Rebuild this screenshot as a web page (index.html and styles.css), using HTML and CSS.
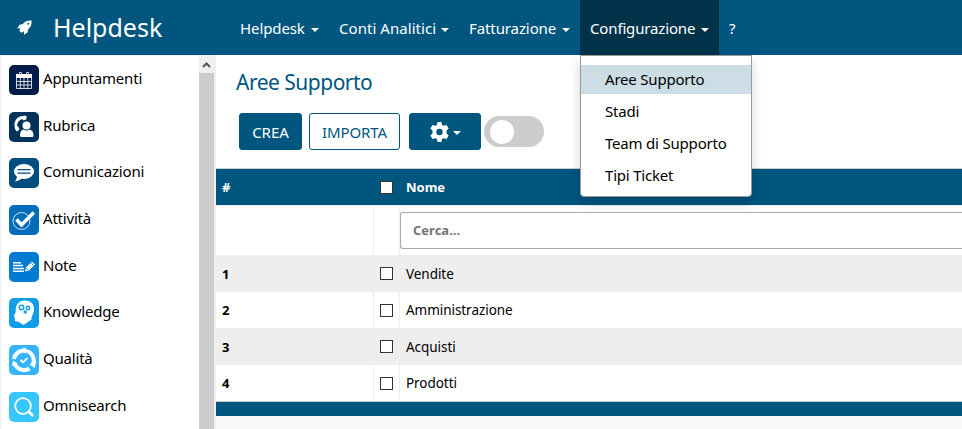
FILE: index.html
```html
<!DOCTYPE html>
<html lang="it">
<head>
<meta charset="utf-8">
<title>Helpdesk</title>
<link rel="stylesheet" href="styles.css">
</head>
<body>
<header class="topbar">
  <svg class="rocket" viewBox="0 0 16 16"><path d="M15.600.5C10.500.2 7.800 1.800 6 4.500L3 4.800.2 8.800l3.500.2L2.500 11.500l2 2L7.200 12l.4 3.700 3.900-2.700.3-3C14.300 8 15.800 5.300 15.600.5z"/><circle class="port" cx="12" cy="4" r="1"/></svg>
  <div class="brand">Helpdesk</div>
  <nav class="nav">
    <div class="nav-item n1"><span>Helpdesk</span><i class="caret"></i></div>
    <div class="nav-item n2"><span>Conti Analitici</span><i class="caret"></i></div>
    <div class="nav-item n3"><span>Fatturazione</span><i class="caret"></i></div>
    <div class="nav-item n4 open"><span>Configurazione</span><i class="caret"></i>
      <div class="menu">
        <div class="menu-item active">Aree Supporto</div>
        <div class="menu-item">Stadi</div>
        <div class="menu-item">Team di Supporto</div>
        <div class="menu-item">Tipi Ticket</div>
      </div>
    </div>
    <div class="nav-item">?</div>
  </nav>
</header>
<div class="body">
  <aside class="sidebar">
    <div class="apps">
      <div class="app"><svg class="c1" viewBox="0 0 30 30"><path class="w" d="M7 9h16v4H7z"/><path class="l" d="M7.500 12v11.500h15V12M7.500 16.500h15M7.500 20h15M11.300 12v11.500M15 12v11.500M18.800 12v11.500"/><path class="l" d="M10.500 10V7.500h2V10M17.500 10V7.500h2V10"/></svg><span>Appuntamenti</span></div>
      <div class="app"><svg class="c2" viewBox="0 0 30 30"><path class="w" d="M17.500 4C10 3 5 7 5.500 14c.2 2.500 1 4 2 5.500l3-1.700-1.300-3.500-1.200 0C8 10.500 10 8 13.500 7l.7 1.500 3.300-1.200z"/><circle class="w" cx="17.500" cy="13.500" r="4"/><path class="w" d="M11 23c0-3.500 1.500-5 3.500-5.500 2 1.300 4 1.300 6 0 2.500.5 4 2.500 4 5.500 0 1.500-.5 2-1.500 2H12.500c-1 0-1.500-.5-1.500-2z"/></svg><span>Rubrica</span></div>
      <div class="app"><svg class="c3" viewBox="0 0 30 30"><ellipse class="w" cx="15" cy="13.500" rx="10" ry="7.500"/><path class="w" d="M8 17c.3 2-.5 4-2 6.500 3-.3 5.500-1.500 7-4z"/><path class="band" d="M8.500 11.700h13M8.500 15.200h13"/></svg><span>Comunicazioni</span></div>
      <div class="app"><svg class="c4" viewBox="0 0 30 30"><circle class="ring" cx="12.500" cy="16" r="8.500"/><path class="tick" d="M7.500 14.500l5 5.500L24.800 7.500"/></svg><span>Attività</span></div>
      <div class="app"><svg class="c5" viewBox="0 0 30 30"><path class="note" d="M4 10.800h8M4 13.600h10M4 16.400h11M4 19.200h11"/><path class="w" d="M16 19.500l1-4 6-6 3 3-6 6z"/><path class="cut" d="M21.500 10.500l3 3M17 16l2.500 2.500"/></svg><span>Note</span></div>
      <div class="app"><svg class="c6" viewBox="0 0 30 30"><path class="w" d="M9 23.500H7c-1.500 0-1-2-1.200-4L4.800 18l2-4C6 7 9.500 2.500 16 2.500c6 0 9 3.500 9 9 0 4-2.700 6-2.500 10L14.500 27z"/><g class="gears"><circle cx="12.500" cy="9.500" r="2.200"/><circle cx="19" cy="10" r="1.700"/><circle cx="16.200" cy="14" r="1"/></g></svg><span>Knowledge</span></div>
      <div class="app"><svg class="c7" viewBox="0 0 30 30"><path class="arc" d="M5 14a10 10 0 0 1 10-8.500M19 6.500a10 10 0 0 1 5 13M20.500 23.500A10 10 0 0 1 5.500 18"/><path class="w" d="M14.500 2l6 4-6 3.500zM27.300 16l-1.500 7-5.500-3.500zM3 21l1-5.500 5 3.500z"/><circle class="halo" cx="15" cy="15" r="7"/><path class="tick2" d="M11.500 15l2.500 2.300 4.500-4.500"/></svg><span>Qualità</span></div>
      <div class="app"><svg class="c8" viewBox="0 0 30 30"><circle class="lens" cx="14" cy="14" r="7.800"/><path class="handle" d="M19.800 19.800l3.500 3.500"/></svg><span>Omnisearch</span></div>
    </div>
    <div class="scroll"><div class="scroll-up"><svg viewBox="0 0 9 6"><path d="M1 5l3.500-3.500L8 5"/></svg></div><div class="thumb"></div></div>
  </aside>
  <main class="main">
    <h1>Aree Supporto</h1>
    <div class="tools">
      <button class="btn crea">CREA</button>
      <button class="btn importa">IMPORTA</button>
      <button class="btn gear"><svg viewBox="0 0 20 20"><path fill-rule="evenodd" d="M8 0h4l.6 2.900 1.600.9L17 2.900l2.200 3.700L17 8.600v2.800l2.200 2-2.200 3.700-2.800-.9-1.600.9L12 20H8l-.6-2.900-1.600-.9-2.800.9-2.200-3.700 2.200-2V8.600L.8 6.600 3 2.900l2.800.9 1.600-.9zM10 6.800a3.200 3.200 0 1 0 0 6.400 3.200 3.200 0 0 0 0-6.400z"/></svg><i class="caret"></i></button>
      <div class="toggle"><i></i></div>
    </div>
    <div class="grid">
      <div class="row head"><div>#</div><div><i class="box"></i></div><div>Nome</div></div>
      <div class="row search"><div></div><div></div><div><div class="field">Cerca...</div></div></div>
      <div class="row odd"><div>1</div><div><i class="box"></i></div><div>Vendite</div></div>
      <div class="row even"><div>2</div><div><i class="box"></i></div><div>Amministrazione</div></div>
      <div class="row odd"><div>3</div><div><i class="box"></i></div><div>Acquisti</div></div>
      <div class="row even"><div>4</div><div><i class="box"></i></div><div>Prodotti</div></div>
      <div class="foot"></div>
    </div>
  </main>
</div>
</body>
</html>
```
FILE: styles.css
```css
* { box-sizing: border-box; }
body { margin: 0; height: 429px; overflow: hidden; font: 15px/20px "Noto Sans", sans-serif; color: #000; background: #fff; }
.topbar { height: 55px; background: #00567f; color: #fff; display: flex; align-items: center; }
.rocket { width: 15px; height: 15px; margin-left: 17px; fill: #fff; }
.rocket .port { fill: #00567f; }
.brand { width: 176px; margin-left: 21px; font-size: 25px; line-height: 55px; white-space: nowrap; }
.nav { display: flex; height: 55px; margin-left: 1px; }
.nav-item { position: relative; display: flex; align-items: center; justify-content: space-between; padding: 1px 10px 0; white-space: nowrap; letter-spacing: -0.1px; }
.n1 { width: 99px; }
.n2 { width: 130px; letter-spacing: 0.05px; }
.n3 { width: 121px; }
.n4 { width: 139px; }
.n4 > span { letter-spacing: -0.15px; }
.open { background: #003349; }
.caret { border: 4px solid transparent; border-top-color: currentColor; border-bottom: 0; margin-top: 3px; }
.menu { position: absolute; left: 0; top: 55px; width: 172px; height: 142px; padding-top: 9px; background: #fff; color: #000; border: 1px solid #999; border-radius: 0 0 4px 4px; box-shadow: 0 6px 12px rgba(0,0,0,.17); z-index: 2; }
.menu-item { height: 29px; margin-bottom: 3px; padding-left: 24px; line-height: 29px; letter-spacing: -0.2px; }
.active { background: #ccdde5; }
.body { display: flex; height: 374px; }
.sidebar { width: 216px; display: flex; border-top: 1px solid #eee; border-left: 1px solid #eee; }
.apps { width: 198px; padding: 9px 0 0 8px; }
.app { height: 46.7px; display: flex; align-items: flex-start; gap: 4px; }
.app span { line-height: 26px; white-space: nowrap; letter-spacing: -0.2px; }
.app svg { width: 30px; height: 30px; border-radius: 5px; flex: none; fill: none; stroke: none; }
.c1 { background: #001b4a; } .c2 { background: #00335c; } .c3 { background: #004d80; } .c4 { background: #006dbb; }
.c5 { background: #007bd3; } .c6 { background: #109fe6; } .c7 { background: #35b5ff; } .c8 { background: #38c6ff; }
.w { fill: #fff; }
.l { stroke: #fff; stroke-width: .8; }
.band { stroke: #004d80; stroke-width: 1.300; }
.ring { stroke: #fff; stroke-width: .8; }
.tick { stroke: #fff; stroke-width: 3.500; }
.note { stroke: #fff; stroke-width: 1.500; }
.cut { stroke: #007bd3; stroke-width: .8; }
.gears { stroke: #109fe6; stroke-width: 1.500; }
.arc { stroke: #fff; stroke-width: 4; }
.halo { fill: #35b5ff; }
.tick2 { stroke: #fff; stroke-width: 1.800; }
.lens { stroke: #fff; stroke-width: 1.800; }
.handle { stroke: #fff; stroke-width: 2.800; stroke-linecap: round; }
.scroll { width: 17px; background: #f0f0f0; padding-right: 2px; }
.scroll-up { height: 17px; display: flex; align-items: center; justify-content: center; }
.scroll-up svg { width: 9px; height: 6px; fill: none; stroke: #555; stroke-width: 2; }
.thumb { height: 356px; background: #cdcdcd; }
.main { flex: 1; background: #f9f9f9; min-width: 0; }
h1 { margin: 0; height: 58px; padding: 14px 0 0 20px; font-size: 21px; letter-spacing: -0.5px; font-weight: 400; line-height: 27px; color: #00567f; background: #fff; }
.tools { display: flex; height: 55px; padding-left: 23px; background: #fff; }
.btn { height: 37px; padding: 0; border: 1px solid #00567f; border-radius: 3px; background: #00567f; color: #fff; font: 15px "Noto Sans", sans-serif; }
.crea { width: 63px; }
.importa { width: 91px; margin-left: 7px; background: #fff; color: #00567f; letter-spacing: -0.1px; }
.gear { width: 72px; margin-left: 9px; display: flex; align-items: center; justify-content: center; gap: 3px; }
.gear svg { width: 21px; height: 20px; fill: #fff; }
.toggle { width: 60px; height: 31px; margin: 3px 0 0 3px; padding: 4px 6px; border-radius: 16px; background: #ccc; }
.toggle i { display: block; width: 24px; height: 24px; border-radius: 50%; background: #fff; }
.grid { border-top: 1px solid #ccc; font-size: 13px; }
.row { display: grid; grid-template-columns: 158px 26px 1fr; height: 37px; background: #fff; }
.row > div { display: flex; align-items: center; padding: 0 6px; border-right: 1px solid #eee; }
.row > div:first-child { font-weight: 700; }
.row > div:last-child { border: 0; }
.odd > div:last-child, .even > div:last-child { font-size: 13.5px; letter-spacing: -0.05px; }
.head { height: 36px; background: #00567f; color: #fff; font-weight: 700; }
.head > div { border-color: #00567f; }
.search { height: 50px; border-top: 1px solid #eee; }
.row.search > div:last-child { padding: 0; align-items: flex-start; }
.field { flex: 1; height: 37px; margin-top: 6px; padding-left: 12px; border: 1px solid #aaa; border-right: 0; border-radius: 3px 0 0 3px; line-height: 34px; font-weight: 700; color: #757575; }
.odd { background: #eee; }
.even { height: 36px; }
.box { width: 13px; height: 13px; flex: none; border: 1px solid #333; background: #fff; }
.foot { height: 15px; background: #00567f; border-top: 1px solid #ccc; }
```
